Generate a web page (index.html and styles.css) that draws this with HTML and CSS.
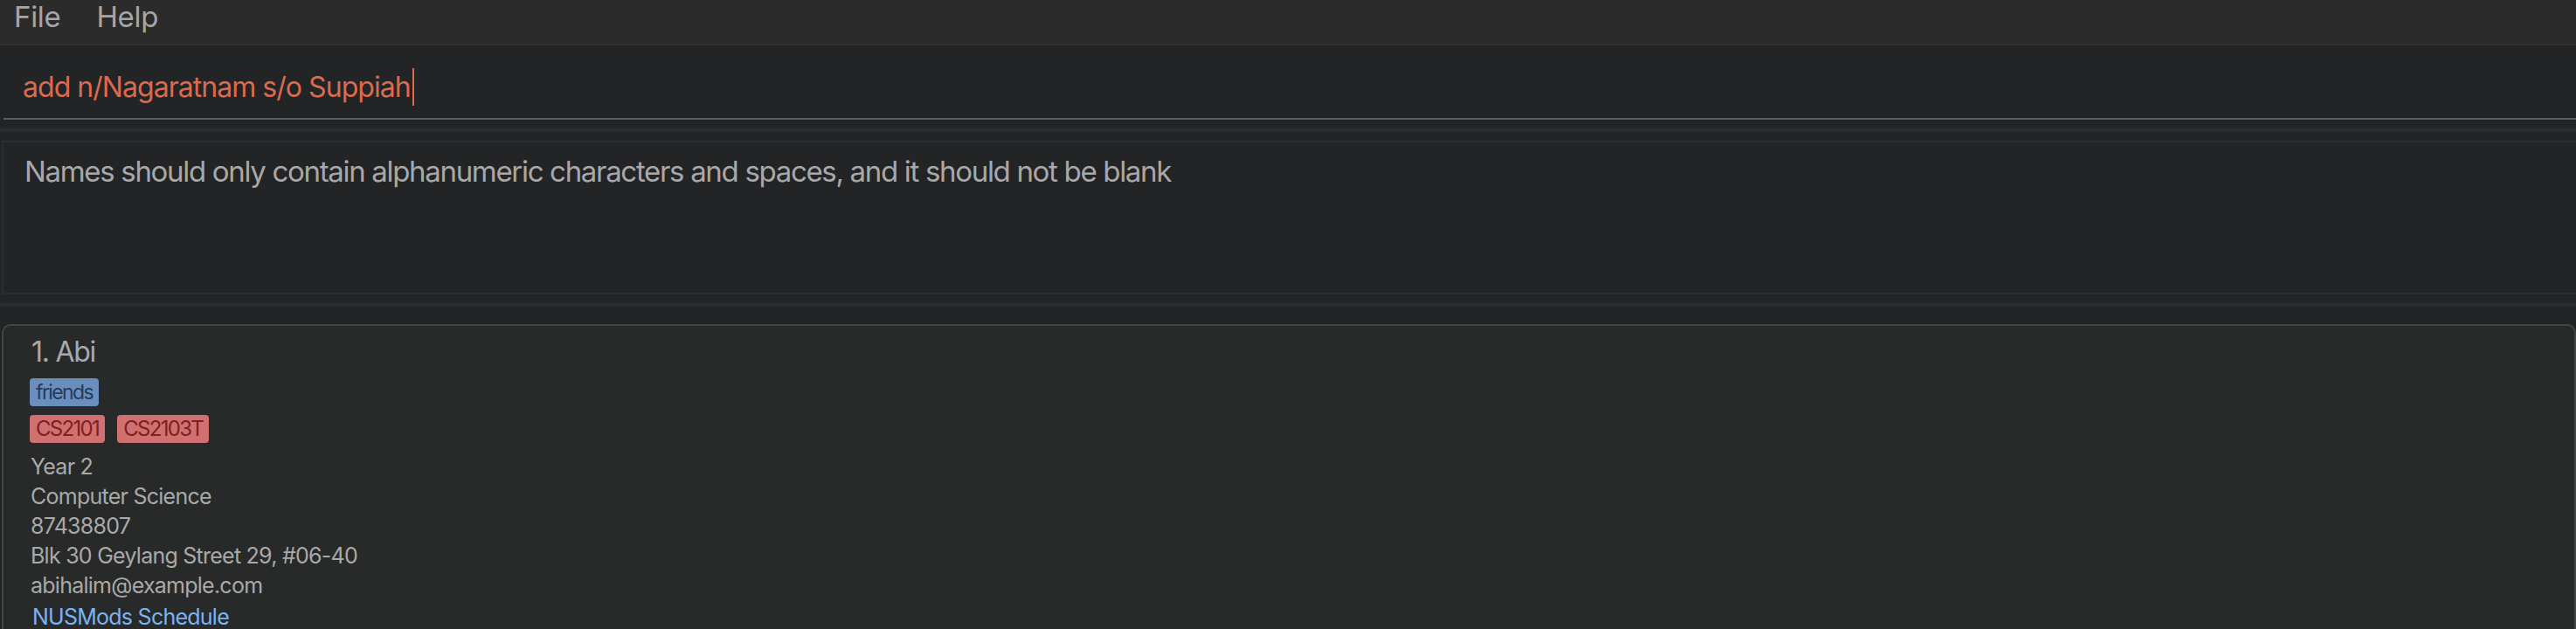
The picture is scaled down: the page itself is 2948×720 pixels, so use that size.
FILE: index.html
```html
<!DOCTYPE html>
<html lang="en">
<head>
<meta charset="utf-8">
<title>Address Book</title>
<link rel="stylesheet" href="styles.css">
</head>
<body>
<div class="app">
  <nav class="menubar">
    <span class="menu-item">File</span>
    <span class="menu-item">Help</span>
  </nav>
  <section class="command-pane">
    <div class="command-field"><span class="command-text">add n/Nagaratnam s/o Suppiah</span><span class="caret"></span></div>
  </section>
  <div class="divider"></div>
  <section class="result-pane">
    <div class="result-box">Names should only contain alphanumeric characters and spaces, and it should not be blank</div>
  </section>
  <div class="divider"></div>
  <section class="list-pane">
    <article class="card">
      <div class="card-name">1. Abi</div>
      <div class="tag-row">
        <span class="tag tag-blue">friends</span>
      </div>
      <div class="tag-row">
        <span class="tag tag-red">CS2101</span>
        <span class="tag tag-red">CS2103T</span>
      </div>
      <div class="details">
        <div class="detail">Year 2</div>
        <div class="detail">Computer Science</div>
        <div class="detail">87438807</div>
        <div class="detail">Blk 30 Geylang Street 29, #06-40</div>
        <div class="detail">abihalim@example.com</div>
        <div class="detail"><span class="link">NUSMods Schedule</span></div>
      </div>
    </article>
  </section>
</div>
</body>
</html>
```
FILE: styles.css
```css
html, body {
  margin: 0;
  padding: 0;
  height: 100%;
  overflow: hidden;
}
body {
  background: #232426;
  font-family: Inter, "Noto Sans", sans-serif;
  color: #a9a9a9;
}
.app {
  display: flex;
  flex-direction: column;
}
.menubar {
  display: flex;
  gap: 41px;
  background: #2b2b2b;
  height: 50px;
  padding-left: 16px;
  font-size: 33px;
  line-height: 38px;
  letter-spacing: -0.01em;
  color: #a6a6a6;
  border-bottom: 2px solid #303031;
  box-sizing: content-box;
}
.command-pane {
  background: #232426;
  padding: 26px 0 10px 4px;
}
.command-field {
  display: flex;
  align-items: center;
  padding: 0 0 14px 22px;
  border-bottom: 2px solid #5a5e60;
  font-size: 32px;
  line-height: 40px;
  letter-spacing: -0.03em;
  color: #db6a4f;
}
.caret {
  display: inline-block;
  width: 2px;
  height: 43px;
  margin-left: 2px;
  background: #db6a4f;
}
.divider {
  height: 4px;
  background: #2b2c2e;
}
.result-pane {
  padding: 10px 0 10px 2px;
}
.result-box {
  box-sizing: border-box;
  height: 176px;
  border: 2px solid #2c2d2f;
  border-right: none;
  padding: 13px 0 0 24px;
  font-size: 33px;
  line-height: 40px;
  letter-spacing: -0.04em;
  color: #a8a8a8;
}
.list-pane {
  padding: 20px 0 0 2px;
}
.card {
  background: #282a29;
  border: 2px solid #434545;
  border-bottom: none;
  border-radius: 10px 10px 0 0;
  padding: 10px 0 40px 30px;
  min-height: 400px;
}
.card-name {
  font-size: 32px;
  line-height: 40px;
  padding-left: 2px;
  letter-spacing: -0.04em;
  color: #a9a9a9;
}
.tag-row {
  display: flex;
  gap: 14px;
  margin-top: 10px;
}
.tag {
  display: inline-block;
  height: 32px;
  line-height: 32px;
  padding: 0 7px;
  border-radius: 4px;
  letter-spacing: -0.07em;
}
.tag-blue {
  background: #6a8ebe;
  color: #253b5c;
  font-size: 23px;
}
.tag-red {
  background: #d07070;
  color: #7c2222;
  font-size: 24px;
}
.details {
  margin-top: 10px;
  padding-left: 1px;
}
.detail {
  font-size: 25px;
  line-height: 34px;
  letter-spacing: -0.03em;
  color: #a9a9a9;
}
.link {
  display: inline-block;
  padding: 2px 0 0 2px;
  color: #7ab4f0;
}
```
